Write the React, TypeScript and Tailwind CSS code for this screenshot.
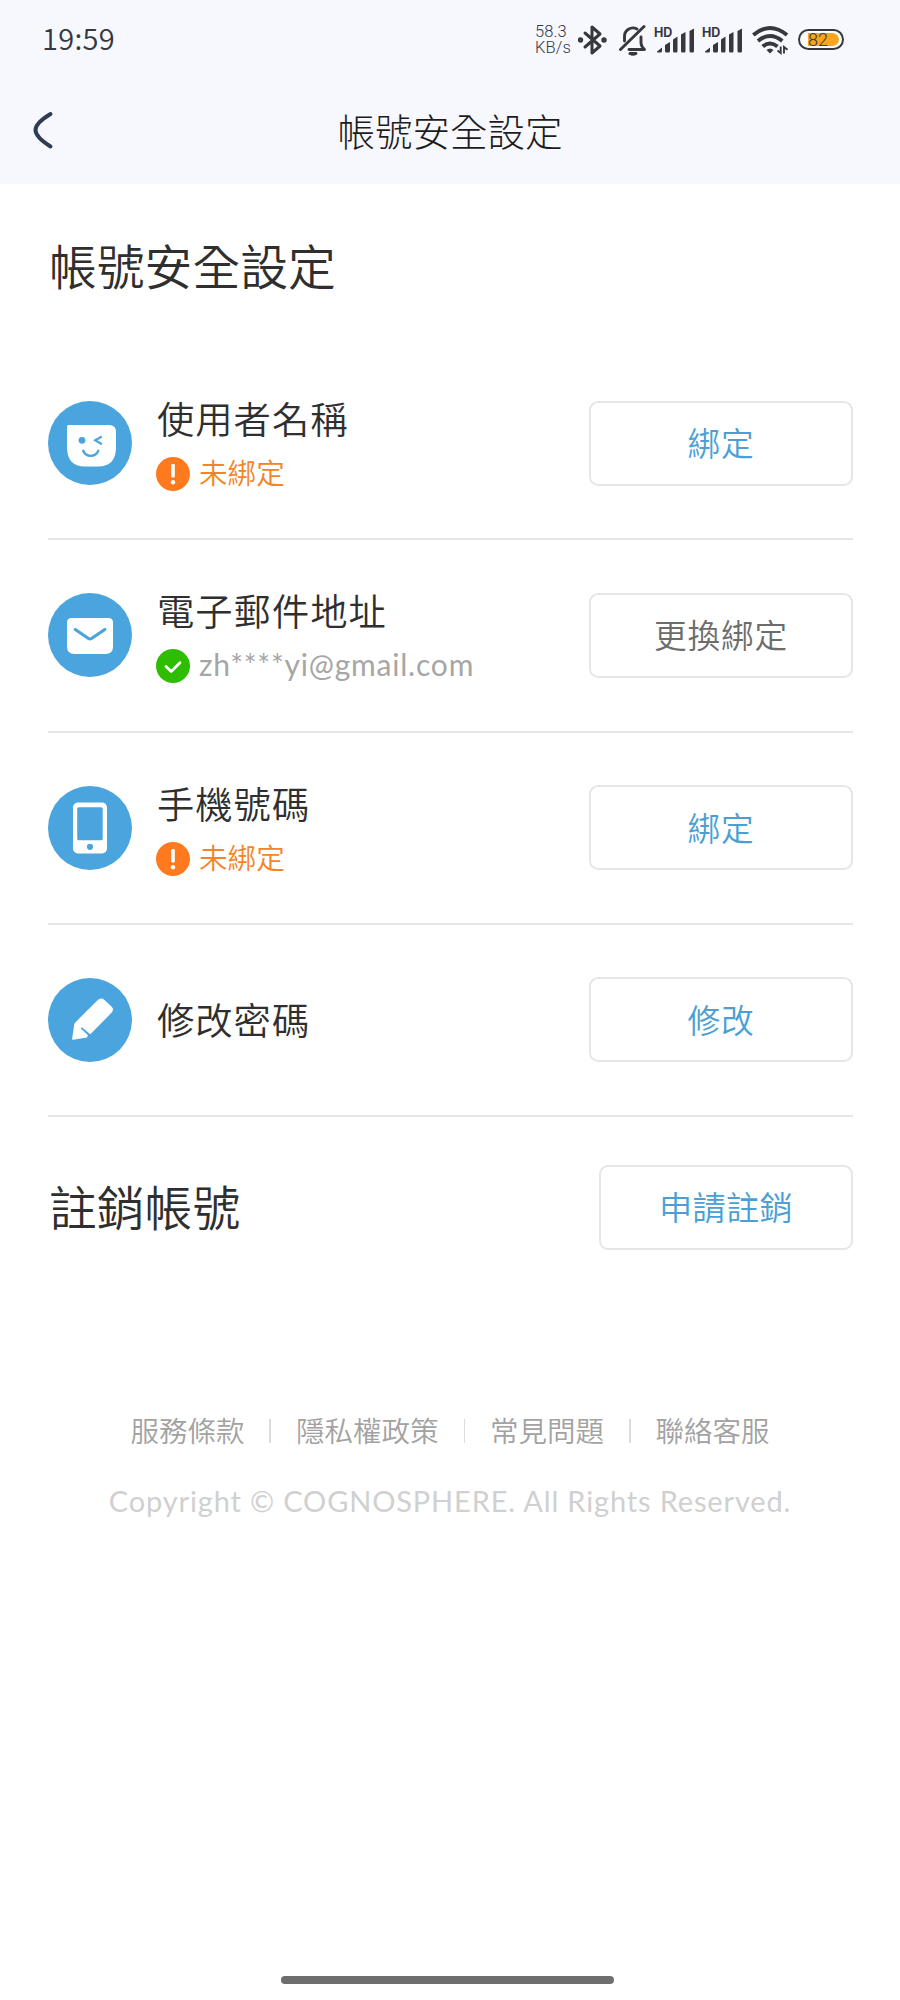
import type { ReactNode } from 'react';

const ACCENT = '#4aa5df';
const INK = '#36373f';

function SignalIcon() {
    return (
        <svg width="41" height="32" viewBox="0 0 41 32" fill={INK}>
            <text x="0" y="12.5" fontSize="12.5" fontWeight="700" fontFamily="Inter, sans-serif">HD</text>
            <path d="M3 27.5L8 23.5V27Q8 28.5 6.5 28.5H4Q2.5 28.5 3 27.5Z" />
            <path d="M11 21L16 18V27Q16 28.5 14.5 28.5H12.5Q11 28.5 11 27Z" />
            <path d="M19 15.5L23.5 12.5V27Q23.5 28.5 22 28.5H20.5Q19 28.5 19 27Z" />
            <path d="M27 10.5L31.5 8V27Q31.5 28.5 30 28.5H28.5Q27 28.5 27 27Z" />
            <path d="M35.5 7L40 4.5V27Q40 28.5 38.5 28.5H37Q35.5 28.5 35.5 27Z" />
        </svg>
    );
}

function StatusBar() {
    return (
        <div className="flex h-[79px] items-center pr-14 pl-[42px] text-[#36373f]">
            <span className="mb-1 flex-1 font-['Noto_Sans_CJK_TC',sans-serif] text-[29px] leading-none font-[350] tracking-[0.3px]">19:59</span>
            <div className="w-[43px] font-[Roboto,sans-serif] text-[16.5px] leading-4 font-light tracking-[0.1px]">
                <div>58.3</div>
                <div>KB/s</div>
            </div>

            {/* Bluetooth */}
            <svg width="30" height="32" viewBox="0 0 30 32" fill="none" stroke={INK} strokeWidth="3" strokeLinejoin="round" strokeLinecap="round">
                <path d="M7 9L22 22L14 29V3L22 10L7 23" />
                <circle cx="2.5" cy="16" r="1.2" />
                <circle cx="26" cy="16" r="1.2" />
            </svg>

            {/* Muted bell */}
            <svg className="ml-[11px]" width="29" height="32" viewBox="0 0 29 32" fill="none" stroke={INK} strokeWidth="2.9" strokeLinejoin="round" strokeLinecap="round">
                <path d="M5.5 17V13A8.5 8.5 0 0 1 18 5" />
                <path d="M22 13V19Q22 22 25.5 25.5H10" />
                <path d="M1.5 25.5L25 2.5" />
                <path d="M11 29.5H17Q14 31 11 29.5Z" />
            </svg>

            <div className="ml-[6px] flex gap-[7px]">
                <SignalIcon />
                <SignalIcon />
            </div>

            {/* Wi-Fi */}
            <svg className="ml-[9px]" width="37" height="32" viewBox="0 0 37 32" fill="none" stroke={INK} strokeWidth="4">
                <path d="M1.3 11Q18 -3 35 11" />
                <path d="M6 17Q18 7 30.3 17" />
                <path d="M10.8 22.5Q18 16.5 25.5 22.5" />
                <path d="M14.5 26Q18 23 21.5 26L18 29.5Z" fill={INK} stroke="none" />
                <path d="M25.5 26.5L28.7 29V22.5M32 29.5V23L35.5 25.8" strokeWidth="1.9" />
            </svg>

            {/* Battery */}
            <div className="ml-[9px] flex h-[21px] w-[46px] items-center justify-end rounded-full border-2 border-[#36373f] bg-white pr-[3px]">
                <div className="flex h-[13px] w-[31px] items-center rounded-r-full bg-[#f9a51f] font-[Roboto,sans-serif] text-[18px] leading-none font-light">
                    82
                </div>
            </div>
        </div>
    );
}

function Disc({ children }: { children: ReactNode }) {
    return (
        <svg className="shrink-0" width="84" height="84" viewBox="0 0 84 84" fill="none">
            <circle cx="42" cy="42" r="42" fill={ACCENT} />
            {children}
        </svg>
    );
}

const faceIcon = (
    <Disc>
        <path d="M20.5 24H61Q68 24 68 31V46Q68 65.5 50 65.5H37Q19 65.5 19 46V25.5Q19 24 20.5 24Z" fill="#fff" />
        <circle cx="34" cy="39.3" r="3.4" fill={ACCENT} />
        <path d="M53 36L47.2 39.3L53 42.8" stroke={ACCENT} strokeWidth="2.2" strokeLinecap="round" />
        <path d="M35.2 49.8C38 56.5 47.5 56.5 50.3 49.8" stroke={ACCENT} strokeWidth="2.4" strokeLinecap="round" />
    </Disc>
);

const mailIcon = (
    <Disc>
        <path d="M23.5 25H60.5Q65 25 65 29.5V53.5Q65 61 57.5 61H26.5Q19 61 19 53.5V29.5Q19 25 23.5 25Z" fill="#fff" />
        <path d="M27.3 36.5L40.5 45.5Q42 46.5 43.5 45.5L56.8 36.5" stroke={ACCENT} strokeWidth="3.2" strokeLinecap="round" />
    </Disc>
);

const phoneIcon = (
    <Disc>
        <rect x="25" y="16.5" width="34" height="51" rx="5" fill="#fff" />
        <rect x="29.2" y="21.3" width="25.5" height="33" rx="1.5" fill={ACCENT} />
        <circle cx="42" cy="60.8" r="3.1" fill={ACCENT} />
    </Disc>
);

const penIcon = (
    <Disc>
        <path d="M25 61.8Q24 61.8 24.2 60.5L26.2 46.5Q26.4 45.3 27.3 44.4L49.5 22.2Q53 19 56.5 22L63.5 28.5Q66.5 31.5 63.5 34.8L42.3 56.3L33.8 49.3L32.8 50.5L40 57.3L39 59.5Z" fill="#fff" />
    </Disc>
);

function StatusBadge({ verified }: { verified?: boolean }) {
    return (
        <svg className="shrink-0" width="34" height="34" viewBox="0 0 34 34" fill="none">
            <circle cx="17" cy="17" r="17" fill={verified ? '#2fbd02' : '#ff7a1f'} />
            {verified ? (
                <path d="M10 17.5L15.2 22.5L24 13.7" stroke="#fff" strokeWidth="2.8" strokeLinecap="round" strokeLinejoin="round" />
            ) : (
                <>
                    <rect x="15.2" y="7" width="3.6" height="13.5" rx="1.2" fill="#fff" />
                    <circle cx="17" cy="25.2" r="2.2" fill="#fff" />
                </>
            )}
        </svg>
    );
}

type Item = {
    icon: ReactNode;
    title: string;
    action: string;
    muted?: boolean;
    value?: string;
    verified?: boolean;
};

const items: Item[] = [
    { icon: faceIcon, title: '使用者名稱', action: '綁定', value: '未綁定' },
    { icon: mailIcon, title: '電子郵件地址', action: '更換綁定', muted: true, value: 'zh****yi@gmail.com', verified: true },
    { icon: phoneIcon, title: '手機號碼', action: '綁定', value: '未綁定' },
    { icon: penIcon, title: '修改密碼', action: '修改' },
];

const links = ['服務條款', '隱私權政策', '常見問題', '聯絡客服'];

function SettingRow({ item }: { item: Item }) {
    return (
        <li className="flex h-[192.25px] items-center border-b-2 border-[#e6e6e6]">
            {item.icon}
            <div className="ml-[25px] flex-1">
                <div className={`text-[37.3px] leading-[46px] tracking-[1px] ${item.value ? 'pb-[3px]' : 'pb-[2px]'}`}>{item.title}</div>
                {item.value && (
                    <div className="mt-[13px] -ml-px flex h-[34px] items-center gap-[9px]">
                        <StatusBadge verified={item.verified} />
                        {item.verified ? (
                            <span className="mb-[5px] font-[Lato,sans-serif] text-[30px] leading-none font-normal tracking-[0.8px] text-[#a6a6a6]">{item.value}</span>
                        ) : (
                            <span className="mb-[3px] text-[28.6px] leading-none text-[#f58426]">{item.value}</span>
                        )}
                    </div>
                )}
            </div>
            <button className={`h-[85px] w-[264px] rounded-[9px] border-2 border-[#e6e6e6] pb-[3px] text-[32.7px] tracking-[0.8px] ${item.muted ? 'text-[#6c6c6c]' : 'text-[#4b9fd5]'}`}>
                {item.action}
            </button>
        </li>
    );
}

export default function App() {
    return (
        <main className="flex h-[2000px] w-[900px] flex-col overflow-hidden bg-white font-['Noto_Sans_CJK_TC',sans-serif] font-[350] text-[#2f2f2f]">
            <header className="h-[184px] bg-[#f7f7fe]">
                <StatusBar />
                <div className="grid h-[105px] grid-cols-[1fr_auto_1fr] items-center px-8">
                    <svg width="22" height="40" viewBox="0 0 22 40" fill="none" className="mb-1">
                        <path d="M18.5 4C-1.5 16 -1.5 24 18.5 36.5" stroke="#2f3c55" strokeWidth="4" strokeLinecap="round" />
                    </svg>
                    <h1 className="mb-1 text-[37.5px] leading-none font-light text-[#1c1c20]">帳號安全設定</h1>
                </div>
            </header>

            <section className="pr-[47px] pl-12">
                <h2 className="mt-[49px] ml-px h-[115px] text-[47.8px] leading-[64px]">帳號安全設定</h2>
                <ul>
                    {items.map((item) => (
                        <SettingRow key={item.title} item={item} />
                    ))}
                </ul>

                {/* Account deletion */}
                <div className="mt-12 flex items-center justify-between">
                    <h2 className="ml-px pb-[3px] text-[47.8px] leading-[64px]">註銷帳號</h2>
                    <button className="h-[85px] w-[254px] rounded-[9px] border-2 border-[#e6e6e6] pb-[3px] text-[33.2px] tracking-[0.3px] text-[#4b9fd5]">
                        申請註銷
                    </button>
                </div>
            </section>

            <footer className="mt-[159px] text-center">
                <nav className="flex h-11 items-center justify-center text-[28.5px] text-[#a2a2a2]">
                    {links.map((label, idx) => (
                        <div key={label} className="flex items-center">
                            {idx > 0 && <i className="mx-[25px] h-6 w-[1.5px] bg-[#dcdcdc]" />}
                            <a className="pb-px">{label}</a>
                        </div>
                    ))}
                </nav>
                <p className="mt-7 font-[Lato,sans-serif] text-[29px] leading-10 font-normal tracking-[0.85px] whitespace-nowrap text-[#d0d0d0]">
                    Copyright © COGNOSPHERE. All Rights Reserved.
                </p>
            </footer>

            {/* Gesture bar */}
            <div className="mt-auto mb-4 ml-[281px] h-2 w-[333px] rounded-full bg-[#6e6e6e]" />
        </main>
    );
}
